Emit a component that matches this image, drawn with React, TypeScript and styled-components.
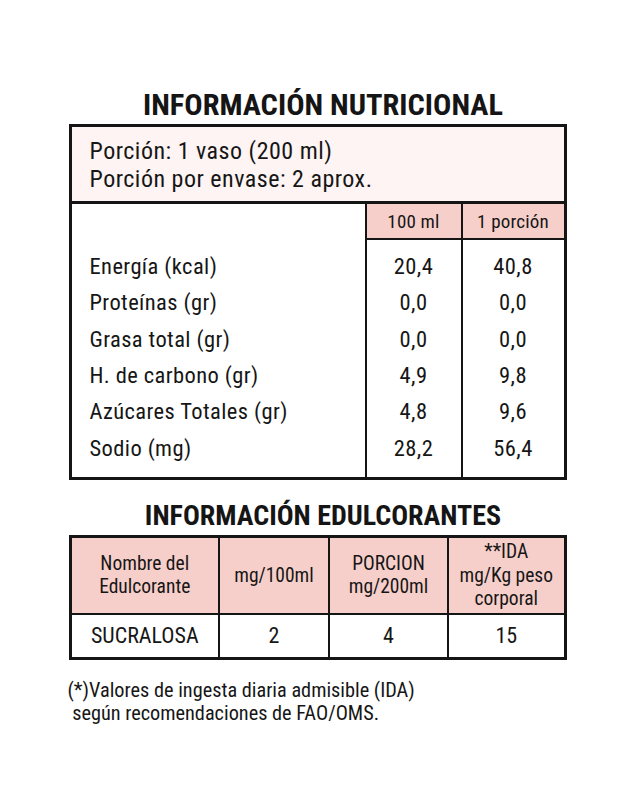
import React, { FC } from 'react';
import styled, { createGlobalStyle } from 'styled-components';

const FONT = "Roboto, 'DejaVu Sans Condensed', 'Liberation Sans', sans-serif";

const GlobalStyle = createGlobalStyle`
  html, body {
    margin: 0;
    padding: 0;
    background: #ffffff;
  }
  body {
    font-family: ${FONT};
    font-stretch: 75%;
    color: #161616;
  }
`;

const INK = '#151515';
const PINK = '#f7cfca';
const BLUSH = '#fdf4f3';

interface NutrientRow {
  label: string;
  per100: string;
  perPortion: string;
}

interface SweetenerRow {
  name: string;
  per100: string;
  perPortion: string;
  ida: string;
}

const nutrients: NutrientRow[] = [
  { label: 'Energía (kcal)', per100: '20,4', perPortion: '40,8' },
  { label: 'Proteínas (gr)', per100: '0,0', perPortion: '0,0' },
  { label: 'Grasa total (gr)', per100: '0,0', perPortion: '0,0' },
  { label: 'H. de carbono (gr)', per100: '4,9', perPortion: '9,8' },
  { label: 'Azúcares Totales (gr)', per100: '4,8', perPortion: '9,6' },
  { label: 'Sodio (mg)', per100: '28,2', perPortion: '56,4' },
];

const sweeteners: SweetenerRow[] = [{ name: 'SUCRALOSA', per100: '2', perPortion: '4', ida: '15' }];

const Page = styled.main`
  width: 498px;
  margin: 0 auto;
  padding-top: 88px;
  display: flex;
  flex-direction: column;
`;

const Title = styled.h1<{ $gap?: string; $size?: string }>`
  margin: 0;
  padding-left: 11px;
  font-family: ${FONT};
  font-stretch: 75%;
  font-weight: 700;
  font-size: ${({ $size }) => $size || '29px'};
  line-height: 34px;
  text-align: center;
  color: ${INK};
  margin-top: ${({ $gap }) => $gap || '0'};
  margin-bottom: 2px;
`;

const Box = styled.section`
  border: 3px solid ${INK};
`;

const Serving = styled.div`
  background: ${BLUSH};
  padding: 10px 18px 8px;
  font-size: 24px;
  letter-spacing: 0.5px;
  line-height: 28px;
  border-bottom: 3px solid ${INK};
`;

const Grid = styled.table`
  width: 100%;
  border-collapse: collapse;
  table-layout: fixed;
  font-size: 22.5px;
  letter-spacing: 0.4px;
`;

const LabelCol = styled.col`
  width: 294px;
`;

const ValueCol = styled.col<{ $w: string }>`
  width: ${({ $w }) => $w};
`;

const HeadCell = styled.th<{ $blank?: boolean }>`
  height: 34px;
  padding: 0;
  font-weight: 400;
  font-size: 19px;
  letter-spacing: 0.2px;
  text-align: center;
  background: ${({ $blank }) => ($blank ? 'transparent' : PINK)};
  border-left: ${({ $blank }) => ($blank ? 'none' : `2.5px solid ${INK}`)};
  border-bottom: ${({ $blank }) => ($blank ? 'none' : `2.5px solid ${INK}`)};
`;

const Cell = styled.td<{ $label?: boolean; $pad?: string }>`
  height: 36.3px;
  padding: ${({ $pad }) => $pad || '0'};
  padding-left: ${({ $label }) => ($label ? '18px' : '0')};
  text-align: ${({ $label }) => ($label ? 'left' : 'center')};
  border-left: ${({ $label }) => ($label ? 'none' : `2.5px solid ${INK}`)};
  vertical-align: middle;
  line-height: 26px;
`;

const SweetTable = styled.table`
  width: 100%;
  border-collapse: collapse;
  table-layout: fixed;
  border: 3px solid ${INK};
`;

const SweetHead = styled.th`
  height: 75px;
  padding: 0 4px;
  background: ${PINK};
  font-weight: 400;
  font-size: 19.5px;
  line-height: 23.5px;
  text-align: center;
  border: 2.5px solid ${INK};
`;

const SweetCell = styled.td`
  height: 42px;
  padding: 0;
  font-size: 22px;
  text-align: center;
  border: 2.5px solid ${INK};
`;

const Note = styled.p`
  margin: 19px 0 0 -1px;
  font-size: 20.3px;
  line-height: 23px;
`;

const NutritionTable: FC = () => (
  <Box>
    <Serving>
      Porción: 1 vaso (200 ml)
      <br />
      Porción por envase: 2 aprox.
    </Serving>
    <Grid>
      <colgroup>
        <LabelCol />
        <ValueCol $w="96px" />
        <ValueCol $w="auto" />
      </colgroup>
      <thead>
        <tr>
          <HeadCell $blank />
          <HeadCell>100 ml</HeadCell>
          <HeadCell>1 porción</HeadCell>
        </tr>
      </thead>
      <tbody>
        {nutrients.map(({ label, per100, perPortion }, i) => {
          const pad = i === 0 ? '8px 0 0' : i === nutrients.length - 1 ? '0 0 11px' : undefined;
          return (
            <tr key={label}>
              <Cell $label $pad={pad}>
                {label}
              </Cell>
              <Cell $pad={pad}>{per100}</Cell>
              <Cell $pad={pad}>{perPortion}</Cell>
            </tr>
          );
        })}
      </tbody>
    </Grid>
  </Box>
);

const SweetenerTable: FC = () => (
  <SweetTable>
    <colgroup>
      <col style={{ width: '149px' }} />
      <col style={{ width: '110px' }} />
      <col style={{ width: '119px' }} />
      <col />
    </colgroup>
    <thead>
      <tr>
        <SweetHead>
          Nombre del
          <br />
          Edulcorante
        </SweetHead>
        <SweetHead>mg/100ml</SweetHead>
        <SweetHead>
          PORCION
          <br />
          mg/200ml
        </SweetHead>
        <SweetHead>
          **IDA
          <br />
          mg/Kg peso
          <br />
          corporal
        </SweetHead>
      </tr>
    </thead>
    <tbody>
      {sweeteners.map(({ name, per100, perPortion, ida }) => (
        <tr key={name}>
          <SweetCell>{name}</SweetCell>
          <SweetCell>{per100}</SweetCell>
          <SweetCell>{perPortion}</SweetCell>
          <SweetCell>{ida}</SweetCell>
        </tr>
      ))}
    </tbody>
  </SweetTable>
);

const App: FC = () => (
  <>
    <GlobalStyle />
    <Page>
      <Title $size="30.4px">INFORMACIÓN NUTRICIONAL</Title>
      <NutritionTable />
      <Title $gap="19px" $size="28px">
        INFORMACIÓN EDULCORANTES
      </Title>
      <SweetenerTable />
      <Note>
        (*)Valores de ingesta diaria admisible (IDA)
        <br />
        &nbsp;según recomendaciones de FAO/OMS.
      </Note>
    </Page>
  </>
);

export default App;
